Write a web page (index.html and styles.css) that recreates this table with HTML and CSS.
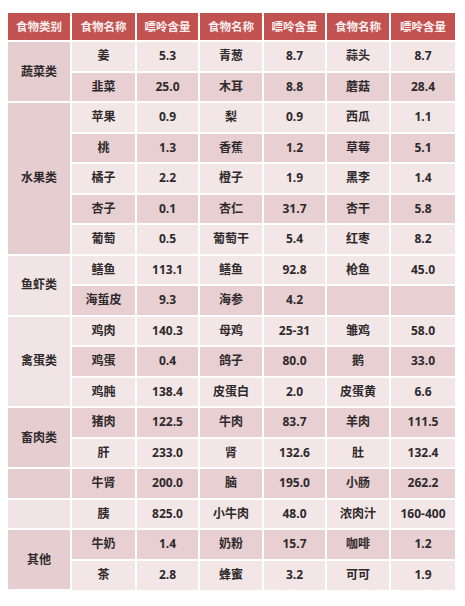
FILE: index.html
```html
<!DOCTYPE html>
<html lang="zh-CN">
<head>
<meta charset="utf-8">
<title>食物嘌呤含量</title>
<link rel="stylesheet" href="styles.css">
</head>
<body>
<div class="wrap">
<table class="purine">
  <colgroup>
    <col class="c1"><col class="c2"><col class="c3"><col class="c4"><col class="c5"><col class="c6"><col class="c7">
  </colgroup>
  <thead>
    <tr><th>食物类别</th><th>食物名称</th><th>嘌呤含量</th><th>食物名称</th><th>嘌呤含量</th><th>食物名称</th><th>嘌呤含量</th></tr>
  </thead>
  <tbody>
    <tr class="lt"><td class="cat dk" rowspan="2">蔬菜类</td><td>姜</td><td>5.3</td><td>青葱</td><td>8.7</td><td>蒜头</td><td>8.7</td></tr>
    <tr class="dk"><td>韭菜</td><td>25.0</td><td>木耳</td><td>8.8</td><td>蘑菇</td><td>28.4</td></tr>
    <tr class="lt"><td class="cat dk" rowspan="5">水果类</td><td>苹果</td><td>0.9</td><td>梨</td><td>0.9</td><td>西瓜</td><td>1.1</td></tr>
    <tr class="dk"><td>桃</td><td>1.3</td><td>香蕉</td><td>1.2</td><td>草莓</td><td>5.1</td></tr>
    <tr class="lt"><td>橘子</td><td>2.2</td><td>橙子</td><td>1.9</td><td>黑李</td><td>1.4</td></tr>
    <tr class="dk"><td>杏子</td><td>0.1</td><td>杏仁</td><td>31.7</td><td>杏干</td><td>5.8</td></tr>
    <tr class="lt"><td>葡萄</td><td>0.5</td><td>葡萄干</td><td>5.4</td><td>红枣</td><td>8.2</td></tr>
    <tr class="lt"><td class="cat lt" rowspan="2">鱼虾类</td><td>鳝鱼</td><td>113.1</td><td>鳝鱼</td><td>92.8</td><td>枪鱼</td><td>45.0</td></tr>
    <tr class="dk"><td>海蜇皮</td><td>9.3</td><td>海参</td><td>4.2</td><td></td><td></td></tr>
    <tr class="lt"><td class="cat lt" rowspan="3">禽蛋类</td><td>鸡肉</td><td>140.3</td><td>母鸡</td><td>25-31</td><td>雏鸡</td><td>58.0</td></tr>
    <tr class="dk"><td>鸡蛋</td><td>0.4</td><td>鸽子</td><td>80.0</td><td>鹅</td><td>33.0</td></tr>
    <tr class="lt"><td>鸡肫</td><td>138.4</td><td>皮蛋白</td><td>2.0</td><td>皮蛋黄</td><td>6.6</td></tr>
    <tr class="dk"><td class="cat dk" rowspan="2">畜肉类</td><td>猪肉</td><td>122.5</td><td>牛肉</td><td>83.7</td><td>羊肉</td><td>111.5</td></tr>
    <tr class="lt"><td>肝</td><td>233.0</td><td>肾</td><td>132.6</td><td>肚</td><td>132.4</td></tr>
    <tr class="dk"><td class="cat dk"></td><td>牛肾</td><td>200.0</td><td>脑</td><td>195.0</td><td>小肠</td><td>262.2</td></tr>
    <tr class="lt"><td class="cat lt"></td><td>胰</td><td>825.0</td><td>小牛肉</td><td>48.0</td><td>浓肉汁</td><td>160-400</td></tr>
    <tr class="dk"><td class="cat dk" rowspan="2">其他</td><td>牛奶</td><td>1.4</td><td>奶粉</td><td>15.7</td><td>咖啡</td><td>1.2</td></tr>
    <tr class="lt"><td>茶</td><td>2.8</td><td>蜂蜜</td><td>3.2</td><td>可可</td><td>1.9</td></tr>
  </tbody>
</table>
<div class="watermark">快传号 / 逆袭娱乐家</div>
</div>
</body>
</html>
```
FILE: styles.css
```css
html, body {
  margin: 0;
  padding: 0;
  background: #ffffff;
}
body {
  font-family: "Open Sans", "Noto Sans CJK SC", sans-serif;
  color: #2e2a2b;
}
.wrap {
  position: relative;
  width: 465px;
  height: 606px;
  padding: 13px 0 0 8px;
  box-sizing: border-box;
}
.purine {
  border-collapse: collapse;
  table-layout: fixed;
  width: 447px;
}
.c1 { width: 63px; }
.c2 { width: 65px; }
.c3 { width: 63px; }
.c4 { width: 64px; }
.c5 { width: 63px; }
.c6 { width: 64px; }
.c7 { width: 65px; }
.purine th,
.purine td {
  border: 2px solid #ffffff;
  padding: 0;
  text-align: center;
  vertical-align: middle;
  font-size: 12px;
  font-weight: 700;
  line-height: 1;
}
.purine thead tr { height: 28px; }
.purine th {
  background: #c2524f;
  color: #fbeeee;
  font-family: "Noto Sans CJK SC", sans-serif;
  font-weight: 700;
  font-size: 11.5px;
  border-top: 0;
}
.purine tbody tr { height: 30.5px; }
.purine tr.lt td { background: #f3e6e7; }
.purine tr.dk td { background: #e8cfd2; }
.purine tr td.cat.lt { background: #f1e4e5; }
.purine tr td.cat.dk { background: #e6cdd0; }
.purine th:first-child,
.purine td.cat { border-left: 0; }
.purine th:last-child,
.purine td:last-child { border-right: 0; }
.purine tbody tr:last-child td { border-bottom: 0; }
.watermark {
  position: absolute;
  left: 264px;
  top: 588px;
  font-family: "Noto Sans CJK SC", sans-serif;
  font-size: 17px;
  line-height: 18px;
  letter-spacing: 4px;
  color: rgba(255, 255, 255, 0.55);
  white-space: nowrap;
}
```
